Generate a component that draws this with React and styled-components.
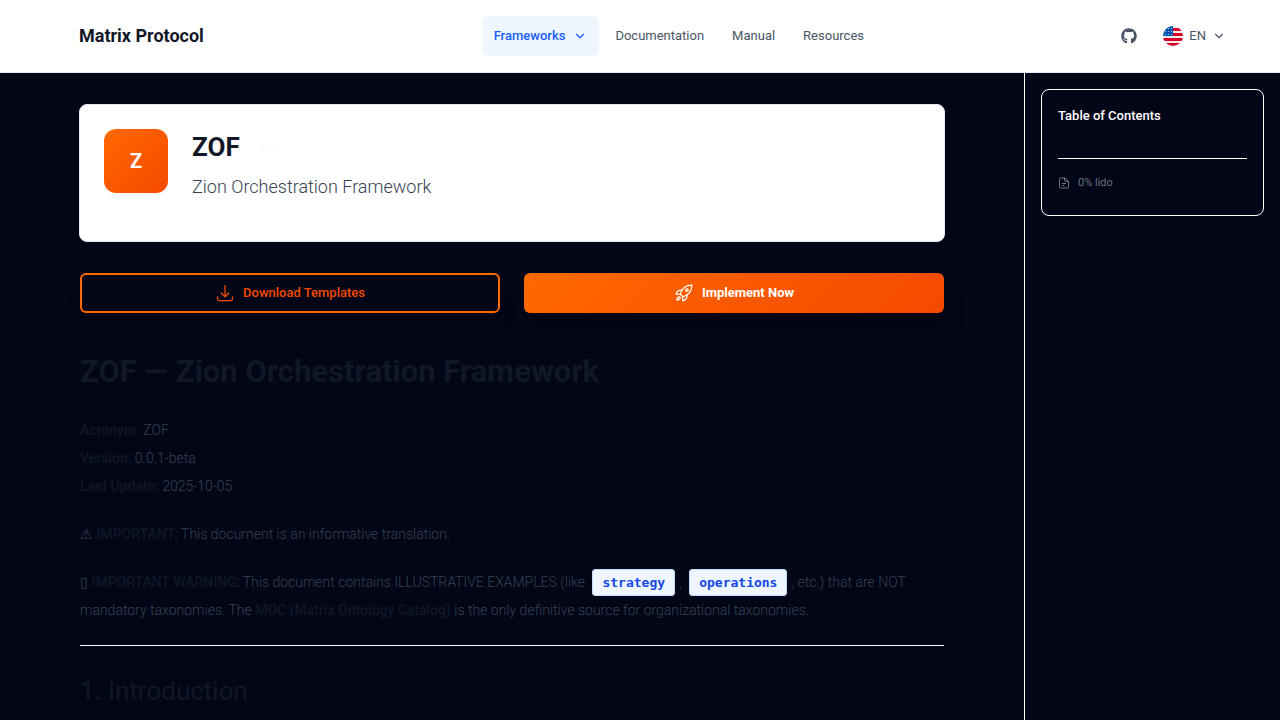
import React from 'react';
import styled, { createGlobalStyle, css } from 'styled-components';
import { ChevronDown } from 'lucide-react';
import { FaGithub } from 'react-icons/fa';
import { HiOutlineArrowDownTray } from 'react-icons/hi2';

const Global = createGlobalStyle`
  *, *::before, *::after { box-sizing: border-box; }
  body {
    margin: 0;
    background: #020617;
    color: #364153;
    font-family: Roboto, "Liberation Sans", sans-serif;
    font-size: 14px;
    line-height: 28px;
  }
  h1, h2, p { margin: 0; }
  button { font-family: inherit; cursor: pointer; }
  svg { flex: none; }
`;

const Page = styled.div`
  min-height: 100vh;
  display: flex;
  flex-direction: column;
  overflow-x: clip;
`;

const Header = styled.header`
  display: grid;
  grid-template-columns: 1fr auto 356px;
  align-items: center;
  height: 73px;
  padding: 0 48px 0 79px;
  background: #fff;
  border-bottom: 1px solid #e2e8f0;
`;

const Brand = styled.a`
  color: #101828;
  font-size: 18px;
  font-weight: 700;
  text-decoration: none;
`;

const Nav = styled.nav`
  display: flex;
  gap: 4px;
`;

const navItem = css`
  display: flex;
  align-items: center;
  gap: 8px;
  height: 40px;
  padding: 0 12px;
  border: 0;
  border-radius: 6px;
  background: transparent;
  color: #4a5565;
  font-size: 13px;
  line-height: 20px;
  font-weight: 400;
  text-decoration: none;
`;

const NavLink = styled.a`${navItem}`;

const NavButton = styled.button`
  ${navItem}
  background: #eff6ff;
  color: #155dfc;
  font-weight: 500;
`;

const Tools = styled.div`
  display: flex;
  justify-content: flex-end;
  align-items: center;
  gap: 20px;
`;

const IconLink = styled.a`
  display: flex;
  color: #4a5565;
`;

const Language = styled.button`
  display: flex;
  align-items: center;
  gap: 6px;
  padding: 6px;
  border: 0;
  background: transparent;
  color: #4a5565;
  font-size: 13px;
  line-height: 20px;
`;

const Columns = styled.div`
  flex: 1;
  display: grid;
  grid-template-columns: minmax(0, 1fr) 256px;
`;

const Main = styled.main`
  padding: 31px 80px 0;
`;

const Hero = styled.section`
  display: flex;
  gap: 24px;
  min-height: 138px;
  margin: 0 -1px;
  padding: 24px;
  border: 1px solid #e2e8f0;
  border-radius: 8px;
  background: #fff;
`;

const Logo = styled.div`
  display: grid;
  place-items: center;
  width: 64px;
  height: 64px;
  border-radius: 12px;
  background: linear-gradient(135deg, #ff6900, #f54900);
  color: #fff;
  font-size: 20px;
  font-weight: 700;
`;

const HeroTitle = styled.div`
  display: flex;
  align-items: center;
  gap: 20px;
  height: 36px;
`;

const HeroName = styled.h1`
  color: #101828;
  font-size: 26px;
  line-height: 36px;
  font-weight: 700;
`;

const Version = styled.span`
  color: #fafcfe;
  font-size: 8px;
  line-height: 16px;
`;

const Subtitle = styled.p`
  margin-top: 8px;
  font-size: 18px;
  line-height: 28px;
  font-weight: 300;
`;

const Actions = styled.div`
  display: grid;
  grid-template-columns: 1fr 1fr;
  gap: 24px;
  margin: 31px 0 39px;
`;

const Action = styled.button`
  display: flex;
  justify-content: center;
  align-items: center;
  gap: 8px;
  height: 40px;
  border: ${(p) => (p.$primary ? '0' : '2px solid #ff6900')};
  border-radius: 6px;
  background: ${(p) => (p.$primary ? 'linear-gradient(135deg, #ff6900, #f54900)' : 'transparent')};
  box-shadow: 0 20px 25px -5px rgba(0, 0, 0, ${(p) => (p.$primary ? 0.3 : 0.1)});
  color: ${(p) => (p.$primary ? '#fff' : '#f54900')};
  font-size: 13px;
  line-height: 20px;
  font-weight: ${(p) => (p.$primary ? 700 : 500)};
`;

const Heading = styled.h1`
  color: #101828;
  font-size: 31px;
  line-height: 40px;
  font-weight: 700;
`;

const SubHeading = styled.h2`
  color: #101828;
  font-size: 26px;
  line-height: 36px;
  font-weight: 400;
`;

const Paragraph = styled.p`
  margin-top: ${(p) => (p.$first ? 24 : 20)}px;
  font-weight: 300;

  strong {
    color: #101828;
    font-weight: 500;
  }
`;

const Code = styled.code`
  margin: 0 4px;
  padding: 5px 9px;
  border: 1px solid #bedbff;
  border-radius: 4px;
  background: #eff6ff;
  color: #1447e6;
  font-family: "DejaVu Sans Mono", "Liberation Mono", monospace;
  font-size: 13px;
  line-height: 20px;
  font-weight: 700;
`;

const Rule = styled.hr`
  margin: 21px 0 27px;
  border: 0;
  border-top: 1px solid #fff;
`;

const Aside = styled.aside`
  padding: 16px;
  border-left: 1px solid #fff;
`;

const Contents = styled.section`
  min-height: 127px;
  padding: 16px;
  border: 1px solid #fff;
  border-radius: 8px;
`;

const ContentsTitle = styled.h2`
  color: #fff;
  font-size: 13px;
  line-height: 20px;
  font-weight: 500;
`;

const Progress = styled.div`
  display: flex;
  align-items: center;
  gap: 8px;
  margin-top: 32px;
  padding-top: 16px;
  border-top: 1px solid #fff;
  color: #6a7282;
  font-size: 11px;
  line-height: 16px;
`;

const Flag = () => (
  <svg width="20" height="20" viewBox="0 0 20 20" aria-hidden="true">
    <clipPath id="flag-round"><circle cx="10" cy="10" r="10" /></clipPath>
    <g clipPath="url(#flag-round)">
      <path fill="#eee" d="M0 0h20v20H0z" />
      <path fill="#d80027" d="M9 2h11v3H9zM9 7h11v3H9zM0 12h20v3H0zM0 17h20v3H0z" />
      <path fill="#0052b4" d="M0 0h10v10H0z" />
      <path stroke="#a9c4e4" strokeWidth="1" strokeDasharray="1 2" d="M5 2.500h5M2 5.500h8M2 8.500h8" />
    </g>
  </svg>
);

const Rocket = () => (
  <svg width="20" height="20" viewBox="0 0 24 24" fill="none" stroke="currentColor" strokeWidth="1.5" strokeLinecap="round" strokeLinejoin="round" aria-hidden="true">
    <path d="M7.5 13.5C9 7.500 13.500 2.500 21.500 2.500C21.500 10.500 16.500 15 10.500 16.500Z" />
    <circle cx="15.500" cy="8.500" r="1.500" />
    <path d="M10 8.500H7.500C5 8.500 3.500 10.500 2.500 13.500H7.500M15.500 14V16.500C15.500 19 13.500 20.500 10.500 21.500V16.500" />
    <path d="M6.500 16.500C4.500 16.500 3.500 18.500 3.500 20.500C5.500 20.500 7.500 19.500 7.500 17.500" />
  </svg>
);

const Doc = () => (
  <svg width="12" height="12" viewBox="0 0 24 24" fill="none" stroke="currentColor" strokeWidth="2" strokeLinejoin="round" aria-hidden="true">
    <path d="M5 2h9l7 7v11a2 2 0 0 1-2 2H5a2 2 0 0 1-2-2V4a2 2 0 0 1 2-2zM13 2v4a3 3 0 0 0 3 3h5M8 13h8M8 17h5" />
  </svg>
);

export default function App() {
  return (
    <Page>
      <Global />
      <Header>
        <Brand href="#">Matrix Protocol</Brand>
        <Nav aria-label="Main">
          <NavButton type="button">Frameworks <ChevronDown size={14} /></NavButton>
          <NavLink href="#documentation">Documentation</NavLink>
          <NavLink href="#manual">Manual</NavLink>
          <NavLink href="#resources">Resources</NavLink>
        </Nav>
        <Tools>
          <IconLink href="#github" aria-label="GitHub"><FaGithub size={16} /></IconLink>
          <Language type="button"><Flag /> EN <ChevronDown size={14} /></Language>
        </Tools>
      </Header>
      <Columns>
        <Main>
          <Hero>
            <Logo>Z</Logo>
            <div>
              <HeroTitle>
                <HeroName>ZOF</HeroName>
                <Version>v0.0.1</Version>
              </HeroTitle>
              <Subtitle>Zion Orchestration Framework</Subtitle>
            </div>
          </Hero>
          <Actions>
            <Action type="button"><HiOutlineArrowDownTray size={20} /> Download Templates</Action>
            <Action type="button" $primary><Rocket /> Implement Now</Action>
          </Actions>
          <Heading>ZOF — Zion Orchestration Framework</Heading>
          <Paragraph $first>
            <strong>Acronym:</strong> ZOF<br />
            <strong>Version:</strong> 0.0.1-beta<br />
            <strong>Last Update:</strong> 2025-10-05
          </Paragraph>
          <Paragraph>⚠ <strong>IMPORTANT</strong>: This document is an informative translation.</Paragraph>
          <Paragraph>
            ▯ <strong>IMPORTANT WARNING</strong>: This document contains ILLUSTRATIVE EXAMPLES (like{' '}
            <Code>strategy</Code>, <Code>operations</Code>, etc.) that are NOT mandatory taxonomies. The{' '}
            <strong>MOC (Matrix Ontology Catalog)</strong> is the only definitive source for organizational taxonomies.
          </Paragraph>
          <Rule />
          <SubHeading>1. Introduction</SubHeading>
        </Main>
        <Aside>
          <Contents>
            <ContentsTitle>Table of Contents</ContentsTitle>
            <Progress><Doc /> 0% lido</Progress>
          </Contents>
        </Aside>
      </Columns>
    </Page>
  );
}
